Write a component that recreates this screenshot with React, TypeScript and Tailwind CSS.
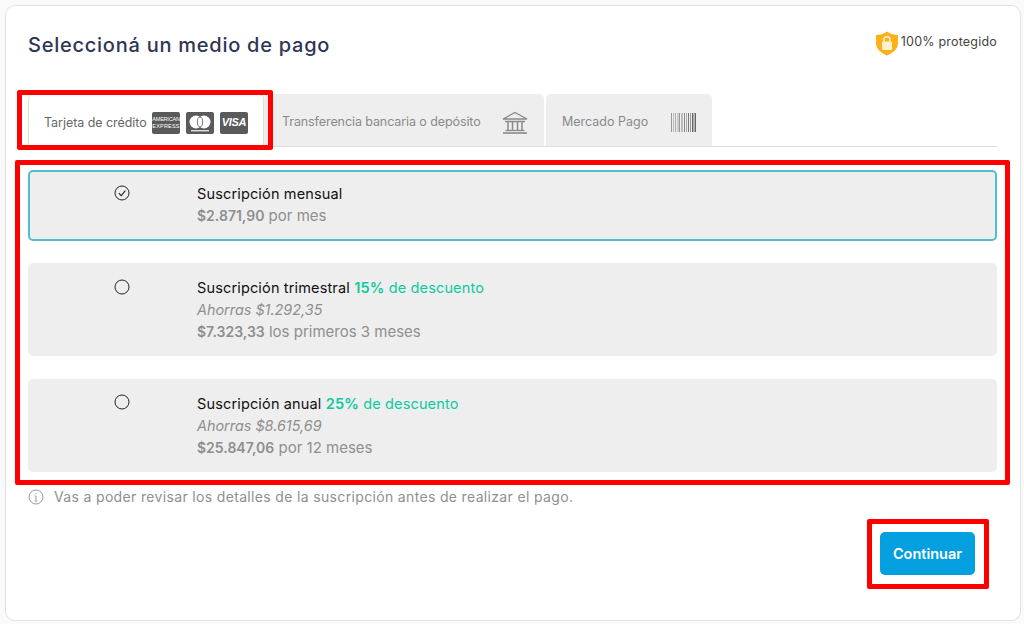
import React from "react";

function Amex() {
  return (
    <div className="flex h-[22px] w-[28px] flex-col items-center justify-center overflow-hidden rounded-[2px] bg-[#5a5a5a] font-['Liberation_Sans',sans-serif] text-[5.5px] leading-[7px] text-white">
      <span className="tracking-[-0.2px] whitespace-nowrap">AMERICAN</span>
      <span className="tracking-[0.2px] whitespace-nowrap">EXPRESS</span>
    </div>
  );
}
function Master() {
  return (
    <div className="flex h-[22px] w-[28px] items-center justify-center rounded-[2px] bg-[#5a5a5a]">
      <svg width="28" height="22" viewBox="0 0 28 22">
        <circle cx="10" cy="10" r="6.5" fill="#fff" />
        <circle cx="18" cy="10" r="6.5" fill="#fff" />
        <ellipse cx="14" cy="10" rx="2.6" ry="5" fill="#fff" stroke="#5a5a5a" strokeWidth="0.8" />
        <rect x="5" y="18" width="18" height="1.4" fill="#ddd" />
      </svg>
    </div>
  );
}
function Visa() {
  return (
    <div className="flex h-[22px] w-[28px] items-center justify-center rounded-[2px] bg-[#5a5a5a] font-['Liberation_Sans',sans-serif] text-[11px] font-bold italic tracking-[-0.3px] text-white">
      VISA
    </div>
  );
}
function Bank() {
  return (
    <svg width="26" height="23" viewBox="0 0 26 23" fill="none" stroke="#8a8a8a" strokeWidth="1.3">
      <path d="M1 8 L13 1.5 L25 8 Z" />
      <path d="M3 10.5 H23" strokeWidth="1.5" />
      <path d="M6 11 V19 M10.5 11 V19 M15.5 11 V19 M20 11 V19" strokeWidth="1.5" />
      <path d="M3.5 19.5 H22.5" />
      <path d="M1 22 H25" strokeWidth="1.6" />
    </svg>
  );
}
function Barcode() {
  const bars = [
    [0, 1, "#999"], [2, 1, "#bbb"], [4, 1, "#aaa"], [6, 2, "#ccc"], [8, 1, "#999"], [10, 2, "#bbb"], [13, 1, "#888"],
    [15, 1, "#aaa"], [17, 1, "#777"], [19, 1, "#999"], [21, 1, "#666"], [22.5, 1, "#777"], [24, 1, "#666"],
  ] as const;
  return (
    <svg width="25" height="19" viewBox="0 0 25 19">
      {bars.map(([x, w, c]) => (
        <rect key={x} x={x} y="0" width={w} height="19" fill={c} />
      ))}
    </svg>
  );
}
function Shield() {
  return (
    <svg width="24" height="25" viewBox="0 0 24 25">
      <path d="M12 0.5 C15 3 19 4 23 4 V12 C23 18 18 22 12 24.5 C6 22 1 18 1 12 V4 C5 4 9 3 12 0.5 Z" fill="#fbb117" />
      <rect x="7" y="10.5" width="10" height="8.5" rx="1" fill="#fff2cf" />
      <path d="M9 10.5 V8.5 C9 4.8 15 4.8 15 8.5 V10.5" fill="none" stroke="#fff2cf" strokeWidth="1.6" />
    </svg>
  );
}
function Check() {
  return (
    <svg width="16" height="16" viewBox="0 0 16 16" fill="none" stroke="#222" strokeWidth="1">
      <circle cx="8" cy="8" r="7" />
      <path d="M4.8 8.2 L7.2 10.6 L11.4 5.6" strokeWidth="1.1" />
    </svg>
  );
}
function Radio() {
  return (
    <svg width="16" height="16" viewBox="0 0 16 16" fill="none" stroke="#222" strokeWidth="1">
      <circle cx="8" cy="8" r="7" />
    </svg>
  );
}
function Info() {
  return (
    <svg width="16" height="16" viewBox="0 0 16 16" fill="none" stroke="#999" strokeWidth="1">
      <circle cx="8" cy="8" r="7" />
      <path d="M8 7 V12 M6.8 12 H9.2 M6.8 7 H8" />
      <circle cx="8" cy="4.6" r="0.7" fill="#999" stroke="none" />
    </svg>
  );
}

function Option({ h, selected, iconTop, icon, children }: { h: string; selected?: boolean; iconTop: string; icon: React.ReactNode; children: React.ReactNode }) {
  return (
    <div className={`flex rounded-[5px] bg-[#eeeeee] ${h} ${selected ? "border-2 border-[#4fbfcf] pt-[12px]" : "pt-[14px]"}`}>
      <div className={`flex w-[169px] justify-center pl-[18px] ${iconTop} ${selected ? "-ml-[2px]" : ""}`}>
        <div className="h-[16px]">{icon}</div>
      </div>
      <div className={`text-[15px] leading-[22px] text-[#8f8f8f] ${selected ? "-mt-[1px]" : ""}`}>{children}</div>
    </div>
  );
}

export default function App() {
  return (
    <div className="relative h-[624px] w-[1024px] overflow-hidden bg-[#fafafa] pt-[5px] pl-[5px] font-['Inter','Noto_Sans',sans-serif]">
      <div className="h-[616px] w-[1016px] rounded-[10px] border border-[#e2e2e2] bg-white pr-[23px] pl-[22px]">
        <div className="flex h-[88px] items-start justify-between pt-[24px]">
          <h1 className="text-[20px] leading-[30px] font-medium tracking-[0.75px] text-[#2f3555]">Seleccioná un medio de pago</h1>
          <div className="flex items-center gap-[2px] pt-[1px] text-[12.5px] tracking-[0.2px] text-[#444]">
            <Shield />
            <span className="-mt-[3px]">100% protegido</span>
          </div>
        </div>
        <div className="flex h-[53px] items-stretch border-b border-[#dedede] text-[12.5px] text-[#8a8a8a]">
          <div className="-mb-px flex w-[236px] items-center gap-[6px] rounded-t-[5px] border border-b-0 border-[#dedede] bg-white pt-[3px] pl-[15px] text-[#666]">
            <span className="w-[102px] pt-[1px] tracking-[-0.05px] whitespace-nowrap">Tarjeta de crédito</span>
            <Amex />
            <Master />
            <Visa />
          </div>
          <div className="flex w-[280px] items-center justify-between rounded-t-[5px] bg-[#eeeeee] pt-[4px] pr-[16px] pl-[18px] tracking-[-0.09px] whitespace-nowrap">
            <span>Transferencia bancaria o depósito</span>
            <Bank />
          </div>
          <div className="ml-[2px] flex w-[166px] items-center justify-between rounded-t-[5px] bg-[#eeeeee] pt-[4px] pr-[16px] pl-[16px] whitespace-nowrap">
            <span>Mercado Pago</span>
            <Barcode />
          </div>
        </div>
        <div className="mt-[23px] flex flex-col">
          <Option h="h-[71px]" selected iconTop="pt-[1px]" icon={<Check />}>
            <div className="text-[14.5px] tracking-[0.15px] text-[#111]">Suscripción mensual</div>
            <div><b className="text-[14px] font-semibold">$2.871,90</b> por mes</div>
          </Option>
          <div className="h-[22px]" />
          <Option h="h-[93px]" iconTop="pt-[2px]" icon={<Radio />}>
            <div className="text-[14.5px] tracking-[0.15px] text-[#111]">Suscripción trimestral <span className="text-[#0cc9a0]"><b className="font-semibold">15%</b> de descuento</span></div>
            <div className="text-[14.4px] italic">Ahorras $1.292,35</div>
            <div><b className="text-[14px] font-semibold">$7.323,33</b> los primeros 3 meses</div>
          </Option>
          <div className="h-[23px]" />
          <Option h="h-[93px]" iconTop="pt-[1px]" icon={<Radio />}>
            <div className="text-[14.5px] tracking-[0.15px] text-[#111]">Suscripción anual <span className="text-[#0cc9a0]"><b className="font-semibold">25%</b> de descuento</span></div>
            <div className="text-[14.4px] italic">Ahorras $8.615,69</div>
            <div><b className="text-[14px] font-semibold">$25.847,06</b> por 12 meses</div>
          </Option>
        </div>
        <div className="mt-[16px] flex items-center gap-[10px] text-[14px] leading-[18px] tracking-[0.34px] text-[#8f8f8f]">
          <Info />
          <span>Vas a poder revisar los detalles de la suscripción antes de realizar el pago.</span>
        </div>
        <div className="mt-[26px] flex justify-end pr-[22px]">
          <button className="h-[43px] w-[95px] rounded-[5px] bg-[#039fdf] text-[14.5px] font-semibold text-white">Continuar</button>
        </div>
      </div>
      <div className="pointer-events-none absolute top-[90px] left-[17px] h-[60px] w-[256px] rounded-[2px] border-[5px] border-[#ff0000]" />
      <div className="pointer-events-none absolute top-[160px] left-[15px] h-[325px] w-[995px] rounded-[2px] border-[5px] border-[#ff0000]" />
      <div className="pointer-events-none absolute top-[519px] left-[867px] h-[70px] w-[122px] rounded-[2px] border-[5px] border-[#ff0000]" />
    </div>
  );
}
